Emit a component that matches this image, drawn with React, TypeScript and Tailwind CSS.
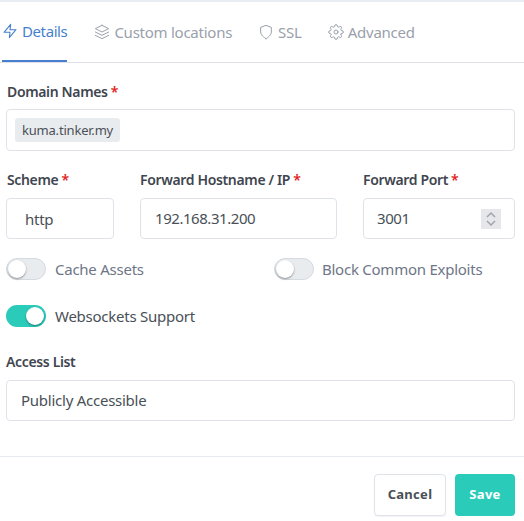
import { FiZap, FiLayers, FiShield, FiSettings } from "react-icons/fi";

const font = "font-['Noto_Sans','Liberation_Sans',sans-serif]";

const Required = () => <span className="text-[#e11d1d] ml-[3px]">*</span>;

const Label = ({ text, required }: { text: string; required?: boolean }) => (
  <div className="h-[20px] text-[14px] leading-[20px] font-semibold text-[#3f4650] tracking-[-0.35px] whitespace-nowrap">
    {text}
    {required && <Required />}
  </div>
);

const Toggle = ({ on }: { on?: boolean }) => (
  <div
    className={
      on
        ? "w-[40px] h-[22px] rounded-full bg-[#2bcbba] flex items-center justify-end pr-[2px] shrink-0"
        : "w-[40px] h-[22px] rounded-full bg-[#e9ecef] border border-[#d5dae1] flex items-center pl-[1px] shrink-0"
    }
  >
    <div className="w-[18px] h-[18px] rounded-full bg-white shadow-[0_1px_2px_rgba(0,0,0,0.4)]" />
  </div>
);

const Tab = ({
  icon,
  text,
  active,
  className,
}: {
  icon: React.ReactNode;
  text: string;
  active?: boolean;
  className?: string;
}) => (
  <div
    className={
      "flex items-center gap-[4px] h-[60px] text-[15px] whitespace-nowrap " +
      (active
        ? "tracking-[-0.4px] text-[#467fcf] border-b-2 border-[#467fcf]"
        : "tracking-[-0.25px] text-[#9aa0ac]") +
      " " +
      (className ?? "")
    }
  >
    {icon}
    {text}
  </div>
);

export default function App() {
  return (
    <div className={`${font} w-[524px] h-[521px] bg-white overflow-hidden border-t-2 border-[#e9ecf0]`}>
      <div className="h-[60px] border-b border-[#dee2e8] flex pl-[2px] -mb-[1px] box-content">
        <Tab active icon={<FiZap size={16} strokeWidth={1.6} />} text="Details" />
        <Tab icon={<FiLayers size={16} strokeWidth={1.5} />} text="Custom locations" className="ml-[27px]" />
        <Tab icon={<FiShield size={16} strokeWidth={1.5} />} text="SSL" className="ml-[26px]" />
        <Tab icon={<FiSettings size={16} strokeWidth={1.5} />} text="Advanced" className="ml-[26px]" />
      </div>

      <div className="px-[6px] pr-[9px] pt-[20px] text-[#495057]">
        <div className="pl-[1px]">
          <Label text="Domain Names" required />
        </div>
        <div className="mt-[7px] h-[42px] border border-[#dfe3e9] rounded-[4px] flex items-center pl-[8px]">
          <span className="h-[24px] px-[7px] bg-[#e9ecef] rounded-[3px] text-[13px] leading-[24px] tracking-[-0.2px] text-[#495057]">
            kuma.tinker.my
          </span>
        </div>

        <div className="mt-[19px] flex gap-[26px]">
          <div className="w-[108px]">
            <div className="pl-[1px]">
              <Label text="Scheme" required />
            </div>
            <div className="mt-[8px] h-[41px] border border-[#dfe3e9] rounded-[4px] flex items-center pl-[18px] text-[15px] tracking-[-0.25px] text-[#495057] pt-[2px]">
              http
            </div>
          </div>
          <div className="w-[197px]">
            <Label text="Forward Hostname / IP" required />
            <div className="mt-[8px] h-[41px] border border-[#dfe3e9] rounded-[4px] flex items-center pl-[14px] text-[15px] tracking-[-0.45px] text-[#495057]">
              192.168.31.200
            </div>
          </div>
          <div className="w-[152px]">
            <Label text="Forward Port" required />
            <div className="mt-[8px] h-[41px] border border-[#dfe3e9] rounded-[4px] flex items-center justify-between pl-[13px] pr-[13px] text-[15px] tracking-[-0.45px] text-[#495057]">
              3001
              <span className="w-[20px] h-[20px] bg-[#e6e6eb] flex items-center justify-center">
                <svg width="14" height="18" viewBox="0 0 14 18" fill="none" stroke="#a0a4ac" strokeWidth="1.5">
                  <path d="M3 7l4-4 4 4" />
                  <path d="M3 11l4 4 4-4" />
                </svg>
              </span>
            </div>
          </div>
        </div>

        <div className="mt-[19px] flex items-center">
          <div className="w-[268px] flex items-center gap-[9px] text-[15px] tracking-[-0.25px] text-[#6e7687]">
            <Toggle />
            Cache Assets
          </div>
          <div className="flex items-center gap-[8px] text-[15px] tracking-[-0.25px] text-[#6e7687]">
            <Toggle />
            Block Common Exploits
          </div>
        </div>

        <div className="mt-[24px] flex items-center gap-[9px] text-[15px] tracking-[-0.25px] text-[#495057]">
          <Toggle on />
          Websockets Support
        </div>

        <div className="mt-[25px]">
          <Label text="Access List" />
        </div>
        <div className="mt-[8px] h-[41px] border border-[#dfe3e9] rounded-[4px] flex items-center pl-[14px] text-[15px] tracking-[-0.25px] text-[#495057]">
          Publicly Accessible
        </div>
      </div>

      <div className="mt-[35px] border-t border-[#e6e9ee] pt-[17px] pr-[9px] flex justify-end gap-[9px]">
        <button className="w-[72px] h-[42px] border border-[#dfe3e9] rounded-[4px] bg-white text-[13px] font-bold tracking-[0.3px] text-[#495057] shadow-[0_1px_1px_rgba(0,0,0,0.05)]">
          Cancel
        </button>
        <button className="w-[60px] h-[42px] rounded-[4px] bg-[#2bcbba] text-[13px] font-bold tracking-[0.3px] text-white">
          Save
        </button>
      </div>
    </div>
  );
}
